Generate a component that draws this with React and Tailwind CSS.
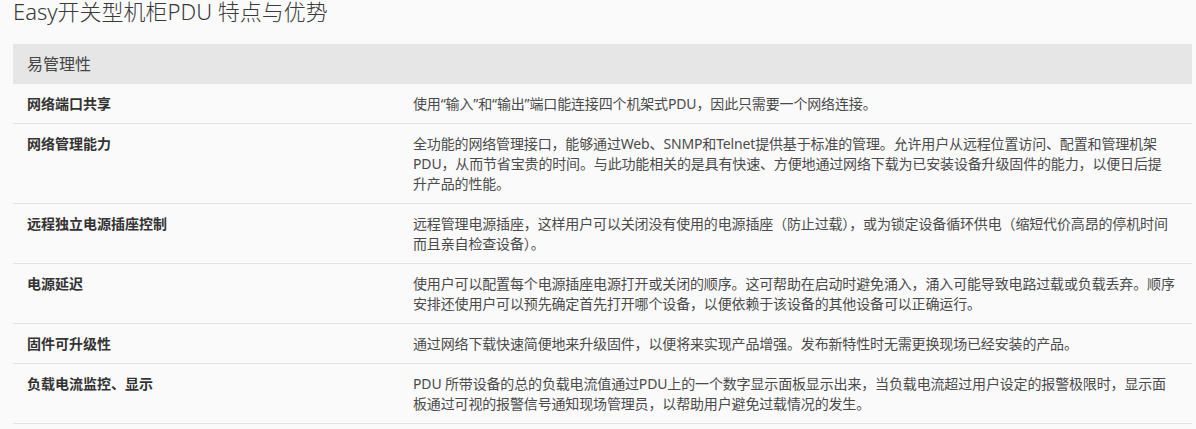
import React from 'react';

// ── Feature rows (lines split the way the original page wraps them) ─────────
const rows = [
  {
    label: '网络端口共享',
    lines: ['使用“输入”和“输出”端口能连接四个机架式PDU，因此只需要一个网络连接。'],
  },
  {
    label: '网络管理能力',
    lines: [
      '全功能的网络管理接口，能够通过Web、SNMP和Telnet提供基于标准的管理。允许用户从远程位置访问、配置和管理机架',
      'PDU，从而节省宝贵的时间。与此功能相关的是具有快速、方便地通过网络下载为已安装设备升级固件的能力，以便日后提',
      '升产品的性能。',
    ],
  },
  {
    label: '远程独立电源插座控制',
    lines: [
      '远程管理电源插座，这样用户可以关闭没有使用的电源插座（防止过载），或为锁定设备循环供电（缩短代价高昂的停机时间',
      '而且亲自检查设备）。',
    ],
  },
  {
    label: '电源延迟',
    lines: [
      '使用户可以配置每个电源插座电源打开或关闭的顺序。这可帮助在启动时避免涌入，涌入可能导致电路过载或负载丢弃。顺序',
      '安排还使用户可以预先确定首先打开哪个设备，以便依赖于该设备的其他设备可以正确运行。',
    ],
  },
  {
    label: '固件可升级性',
    lines: ['通过网络下载快速简便地来升级固件，以便将来实现产品增强。发布新特性时无需更换现场已经安装的产品。'],
  },
  {
    label: '负载电流监控、显示',
    lines: [
      'PDU 所带设备的总的负载电流值通过PDU上的一个数字显示面板显示出来，当负载电流超过用户设定的报警极限时，显示面',
      '板通过可视的报警信号通知现场管理员，以帮助用户避免过载情况的发生。',
    ],
  },
];

const App = () => {
  return (
    <div className="min-h-screen w-full bg-[#fafafa] text-[#333] font-['Noto_Sans','Noto_Sans_CJK_SC',sans-serif]">
      <h1 className="pl-[13px] text-[22px] leading-[22px] font-light text-[#3a3a3a]">
        Easy开关型机柜PDU 特点与优势
      </h1>

      <div className="ml-[13px] mt-[22px] w-[1179px]">
        {/* ── Section header ── */}
        <div className="flex h-[40px] items-center bg-[#e6e6e6] px-[14px] text-[16px] text-[#444]">
          易管理性
        </div>

        {/* ── Rows ── */}
        {rows.map((r) => (
          <div key={r.label} className="flex border-b border-[#e3e3e3] text-[14px] leading-[20px]">
            <div className="w-[386px] shrink-0 pl-[14px] pt-[10px] pb-[9px] font-bold text-[#333]">
              {r.label}
            </div>
            <div className="min-w-0 flex-1 pl-[14px] pt-[10px] pb-[9px] tracking-[-0.15px] text-[#4a4a4a]">
              {r.lines.map((l, i) => (
                <div key={i} className="whitespace-nowrap">{l}</div>
              ))}
            </div>
          </div>
        ))}
      </div>
    </div>
  );
};

export default App;
